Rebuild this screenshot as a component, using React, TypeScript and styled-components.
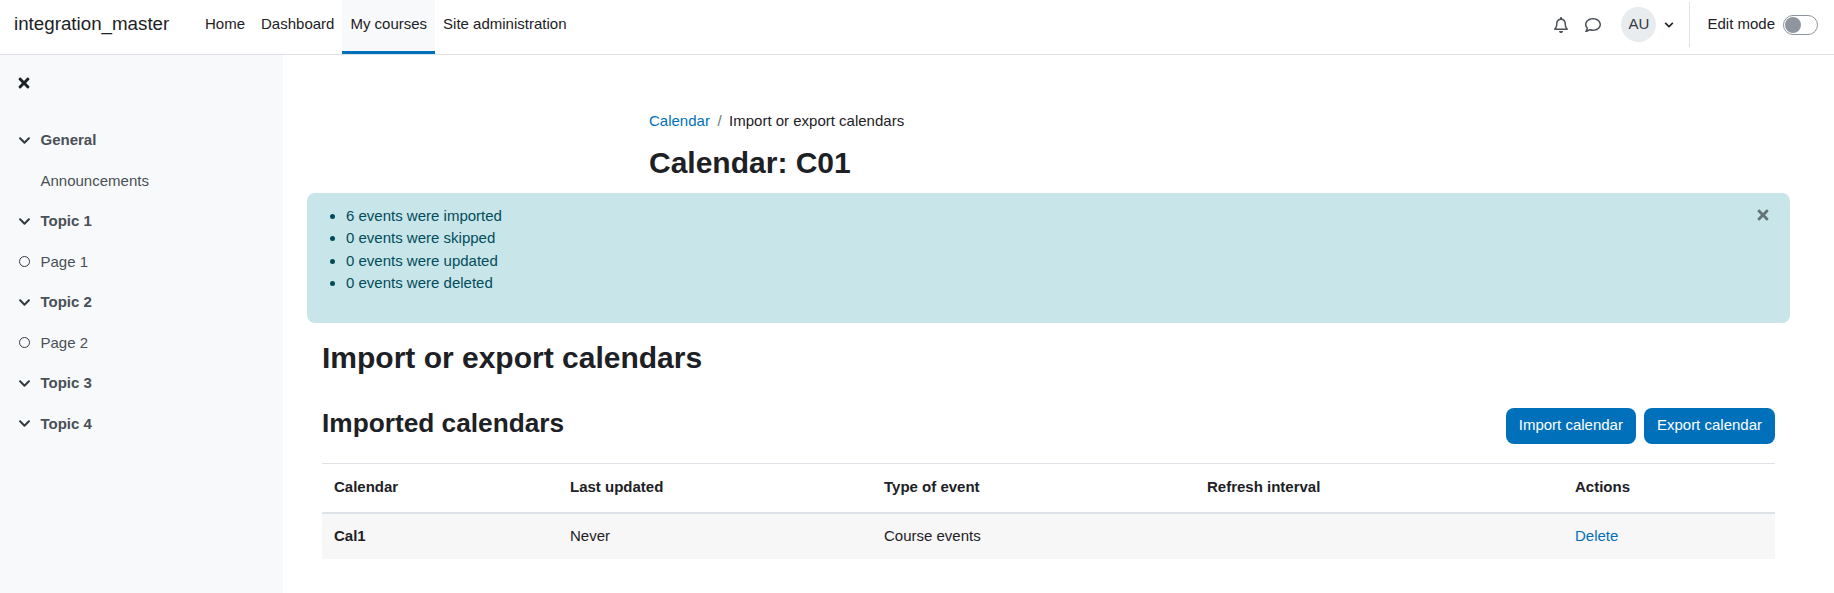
import React from "react";
import styled, { createGlobalStyle } from "styled-components";
import { FaChevronDown, FaTimes } from "react-icons/fa";
import { FaRegBell, FaRegComment } from "react-icons/fa6";

const Global = createGlobalStyle`
  html, body { margin: 0; padding: 0; background: #fff; }
  body {
    font-family: "Liberation Sans", Arial, sans-serif;
    font-size: 15px;
    line-height: 22.5px;
    color: #1d2125;
  }
  * { box-sizing: border-box; }
`;

const Page = styled.div`
  display: flex;
  flex-direction: column;
  height: 593px;
  overflow: hidden;
`;

const Navbar = styled.header`
  display: flex;
  align-items: stretch;
  height: 55px;
  flex: none;
  border-bottom: 1px solid #dee2e6;
  background: #fff;
`;

const Brand = styled.div`
  font-size: 18.75px;
  line-height: 48px;
  padding-left: 14px;
  width: 197px;
  flex: none;
`;

const NavList = styled.nav`
  display: flex;
  align-items: stretch;
`;

const NavItem = styled.a<{ $active?: boolean }>`
  display: flex;
  align-items: center;
  padding: 0 8px 3px;
  height: 54px;
  color: #1d2125;
  background: ${(p) => (p.$active ? "#f8f9fa" : "transparent")};
  border-bottom: 3px solid ${(p) => (p.$active ? "#0070ba" : "transparent")};
`;

const NavRight = styled.div`
  margin-left: auto;
  display: flex;
  align-items: center;
  height: 49px;
  color: #495057;
`;

const IconSlot = styled.span<{ $gap?: number }>`
  display: flex;
  justify-content: center;
  align-items: center;
  width: 16px;
  margin-left: ${(p) => p.$gap ?? 0}px;
`;

const Avatar = styled.div`
  width: 35px;
  height: 35px;
  margin-left: 20px;
  border-radius: 50%;
  background: #e9ecef;
  color: #343a40;
  display: flex;
  align-items: center;
  justify-content: center;
`;

const UserCaret = styled.span`
  display: flex;
  margin-left: 8px;
  color: #1d2125;
`;

const Divider = styled.div`
  width: 1px;
  height: 45px;
  margin-left: 15px;
  background: #dee2e6;
`;

const EditLabel = styled.span`
  margin-left: 17px;
  color: #1d2125;
`;

const Switch = styled.span`
  display: block;
  position: relative;
  width: 35px;
  height: 20px;
  margin: 0 16px 0 8px;
  border: 1px solid #8f959e;
  border-radius: 10px;
  background: #fff;
`;

const Knob = styled.span`
  position: absolute;
  left: 1px;
  top: 1px;
  width: 16px;
  height: 16px;
  border-radius: 50%;
  background: #8f959e;
`;

const Body = styled.div`
  display: flex;
  flex: 1;
  min-height: 0;
`;

const Sidebar = styled.aside`
  width: 283px;
  flex: none;
  background: #f8f9fa;
  padding: 20px 19px 0;
`;

const SideClose = styled.div`
  display: flex;
  height: 16px;
  align-items: center;
  margin: 0 0 29px -3px;
  color: #1d2125;
`;

const SideRow = styled.div<{ $section?: boolean }>`
  display: flex;
  align-items: center;
  height: 40.5px;
  color: #495057;
  font-weight: ${(p) => (p.$section ? 700 : 400)};
`;

const SideIcon = styled.span`
  display: flex;
  width: 21.5px;
  flex: none;
  color: #343a40;
`;

const Chevron = styled(FaChevronDown)`
  margin-left: -1px;
`;

const Circle = styled.span`
  width: 11px;
  height: 11px;
  border: 1.5px solid #343a40;
  border-radius: 50%;
`;

const Main = styled.main`
  flex: 1;
  min-width: 0;
  padding: 55px 44px 0 24px;
`;

const PageHead = styled.div`
  margin-left: 342px;
`;

const Breadcrumb = styled.div`
  display: flex;
`;

const Link = styled.a`
  color: #0070ba;
`;

const Sep = styled.span`
  padding: 0 7.5px;
  color: #6a737b;
`;

const Title = styled.h1`
  margin: 13px 0 13px;
  font-size: 30px;
  line-height: 34px;
  font-weight: 700;
`;

const Alert = styled.div`
  position: relative;
  height: 130px;
  padding: 12px 15px;
  border-radius: 8px;
  background: #c8e5e9;
  color: #014c5b;
`;

const AlertList = styled.ul`
  margin: 0;
  padding-left: 24px;
`;

const CloseBtn = styled.span`
  position: absolute;
  top: 14px;
  right: 19px;
  display: flex;
  color: #657377;
`;

const Content = styled.div`
  padding: 0 15px;
`;

const Heading = styled.h2`
  margin: 18px 0 0;
  font-size: 30px;
  line-height: 34px;
  font-weight: 700;
`;

const Toolbar = styled.div`
  display: flex;
  align-items: center;
  margin-top: 33px;
  height: 36px;
  gap: 8px;
`;

const SubHeading = styled.h3`
  margin: 0 auto 6px 0;
  font-size: 26.25px;
  line-height: 30px;
  font-weight: 700;
`;

const Button = styled.button`
  height: 36px;
  padding: 0 13px;
  border: 0;
  border-radius: 8px;
  background: #0070ba;
  color: #fff;
  font: inherit;
`;

const Table = styled.table`
  width: 100%;
  margin-top: 19px;
  border-collapse: collapse;
  table-layout: fixed;
`;

const Th = styled.th<{ $w: number }>`
  width: ${(p) => p.$w}px;
  height: 50px;
  padding: 0 12px 1px;
  text-align: left;
  font-weight: 700;
  border-top: 1px solid #dee2e6;
  border-bottom: 2px solid #dee2e6;
`;

const Row = styled.tr`
  background: #f7f7f7;
`;

const Td = styled.td<{ $bold?: boolean }>`
  height: 46px;
  padding: 0 12px;
  font-weight: ${(p) => (p.$bold ? 700 : 400)};
`;

const sections: { label: string; section?: boolean; circle?: boolean }[] = [
  { label: "General", section: true },
  { label: "Announcements" },
  { label: "Topic 1", section: true },
  { label: "Page 1", circle: true },
  { label: "Topic 2", section: true },
  { label: "Page 2", circle: true },
  { label: "Topic 3", section: true },
  { label: "Topic 4", section: true },
];

export default function App() {
  return (
    <Page>
      <Global />
      <Navbar>
        <Brand>integration_master</Brand>
        <NavList>
          <NavItem>Home</NavItem>
          <NavItem>Dashboard</NavItem>
          <NavItem $active>My courses</NavItem>
          <NavItem>Site administration</NavItem>
        </NavList>
        <NavRight>
          <IconSlot><FaRegBell size={16} /></IconSlot>
          <IconSlot $gap={16}><FaRegComment size={16} /></IconSlot>
          <Avatar>AU</Avatar>
          <UserCaret><FaChevronDown size={10} /></UserCaret>
          <Divider />
          <EditLabel>Edit mode</EditLabel>
          <Switch><Knob /></Switch>
        </NavRight>
      </Navbar>
      <Body>
        <Sidebar>
          <SideClose><FaTimes size={16} /></SideClose>
          {sections.map((s) => (
            <SideRow key={s.label} $section={s.section}>
              <SideIcon>
                {s.section && <Chevron size={13} />}
                {s.circle && <Circle />}
              </SideIcon>
              {s.label}
            </SideRow>
          ))}
        </Sidebar>
        <Main>
          <PageHead>
            <Breadcrumb>
              <Link>Calendar</Link>
              <Sep>/</Sep>
              <span>Import or export calendars</span>
            </Breadcrumb>
            <Title>Calendar: C01</Title>
          </PageHead>
          <Alert>
            <AlertList>
              <li>6 events were imported</li>
              <li>0 events were skipped</li>
              <li>0 events were updated</li>
              <li>0 events were deleted</li>
            </AlertList>
            <CloseBtn><FaTimes size={16} /></CloseBtn>
          </Alert>
          <Content>
            <Heading>Import or export calendars</Heading>
            <Toolbar>
              <SubHeading>Imported calendars</SubHeading>
              <Button>Import calendar</Button>
              <Button>Export calendar</Button>
            </Toolbar>
            <Table>
              <thead>
                <tr>
                  <Th $w={236}>Calendar</Th>
                  <Th $w={314}>Last updated</Th>
                  <Th $w={323}>Type of event</Th>
                  <Th $w={368}>Refresh interval</Th>
                  <Th $w={212}>Actions</Th>
                </tr>
              </thead>
              <tbody>
                <Row>
                  <Td $bold>Cal1</Td>
                  <Td>Never</Td>
                  <Td>Course events</Td>
                  <Td />
                  <Td><Link>Delete</Link></Td>
                </Row>
              </tbody>
            </Table>
          </Content>
        </Main>
      </Body>
    </Page>
  );
}
